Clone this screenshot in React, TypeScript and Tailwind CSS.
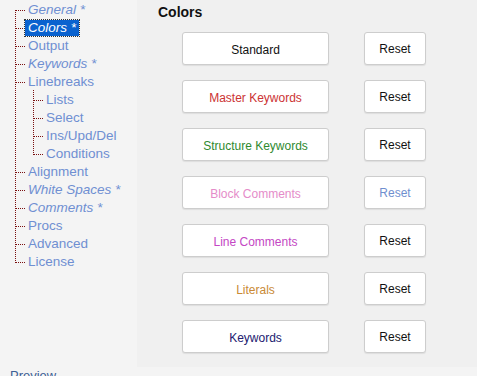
import React from "react";

type Item = { label: string; level: 0 | 1; italic?: boolean; selected?: boolean };

const items: Item[] = [
  { label: "General *", level: 0, italic: true },
  { label: "Colors *", level: 0, italic: true, selected: true },
  { label: "Output", level: 0 },
  { label: "Keywords *", level: 0, italic: true },
  { label: "Linebreaks", level: 0 },
  { label: "Lists", level: 1 },
  { label: "Select", level: 1 },
  { label: "Ins/Upd/Del", level: 1 },
  { label: "Conditions", level: 1 },
  { label: "Alignment", level: 0 },
  { label: "White Spaces *", level: 0, italic: true },
  { label: "Comments *", level: 0, italic: true },
  { label: "Procs", level: 0 },
  { label: "Advanced", level: 0 },
  { label: "License", level: 0 },
];

const LINE = "#7a1010";

function Connector({ level, first, last, nestedLast }: { level: 0 | 1; first: boolean; last: boolean; nestedLast: boolean }) {
  const w = level === 0 ? 25 : 43;
  return (
    <svg width={w} height={18} className="shrink-0" shapeRendering="crispEdges">
      <line x1={15.5} y1={first ? 10 : 0} x2={15.5} y2={last ? 11 : 18} stroke={LINE} strokeWidth={1} strokeDasharray="1 1" />
      {level === 0 ? (
        <line x1={16} y1={10.5} x2={25} y2={10.5} stroke={LINE} strokeWidth={1} strokeDasharray="1 1" />
      ) : (
        <>
          <line x1={33.5} y1={0} x2={33.5} y2={nestedLast ? 11 : 18} stroke={LINE} strokeWidth={1} strokeDasharray="1 1" />
          <line x1={34} y1={10.5} x2={43} y2={10.5} stroke={LINE} strokeWidth={1} strokeDasharray="1 1" />
        </>
      )}
    </svg>
  );
}

const rows = [
  { label: "Standard", color: "text-[#111111]", reset: "text-[#111111]" },
  { label: "Master Keywords", color: "text-[#cc3333]", reset: "text-[#111111]" },
  { label: "Structure Keywords", color: "text-[#2f8a2f]", reset: "text-[#111111]" },
  { label: "Block Comments", color: "text-[#e58cc9]", reset: "text-[#6f8fcf]" },
  { label: "Line Comments", color: "text-[#c447c4]", reset: "text-[#111111]" },
  { label: "Literals", color: "text-[#c98a35]", reset: "text-[#111111]" },
  { label: "Keywords", color: "text-[#222070]", reset: "text-[#111111]" },
];

export default function App() {
  return (
    <div
      className="w-[477px] h-[376px] overflow-hidden bg-[#f4f4f4] flex flex-col"
      style={{ fontFamily: '"Liberation Sans", Arial, sans-serif' }}
    >
      <div className="flex h-[367px] shrink-0">
        <div className="w-[137px] shrink-0 flex flex-col">
          {items.map((it, i) => (
            <div key={it.label} className="flex items-center h-[18px]">
              <Connector
                level={it.level}
                first={i === 0}
                last={i === items.length - 1}
                nestedLast={it.label === "Conditions"}
              />
              <span
                className={
                  "px-[3px] h-[16px] leading-[16px] mt-[2px] text-[13.5px] whitespace-nowrap " +
                  (it.italic ? "italic " : "") +
                  (it.selected
                    ? "bg-[#0a62cf] text-white outline outline-1 outline-dotted outline-[#333]"
                    : "text-[#6f8fd2]")
                }
              >
                {it.label}
              </span>
            </div>
          ))}
        </div>
        <div className="flex-1 bg-[#f0f0f0] flex flex-col">
          <div className="pl-[21px] pt-[4px] text-[14px] leading-[16px] font-bold text-[#111111]">Colors</div>
          <div className="flex flex-col gap-[15px] mt-[12px] pl-[45px]">
            {rows.map((r) => (
              <div key={r.label} className="flex gap-[35px]">
                <div
                  className={
                    "w-[147px] h-[33px] pt-[2px] bg-white border border-[#cdcdcd] rounded-[3px] shadow-[0_1px_1px_rgba(0,0,0,0.08)] flex items-center justify-center text-[12px] " +
                    r.color
                  }
                >
                  {r.label}
                </div>
                <div
                  className={
                    "w-[62px] h-[33px] pt-[1px] bg-white border border-[#cdcdcd] rounded-[3px] shadow-[0_1px_1px_rgba(0,0,0,0.08)] flex items-center justify-center text-[12px] " +
                    r.reset
                  }
                >
                  Reset
                </div>
              </div>
            ))}
          </div>
        </div>
      </div>
      <div className="pl-[10px] pt-[1px] text-[13px] leading-[16px] text-[#3d5f95]">Preview</div>
    </div>
  );
}
